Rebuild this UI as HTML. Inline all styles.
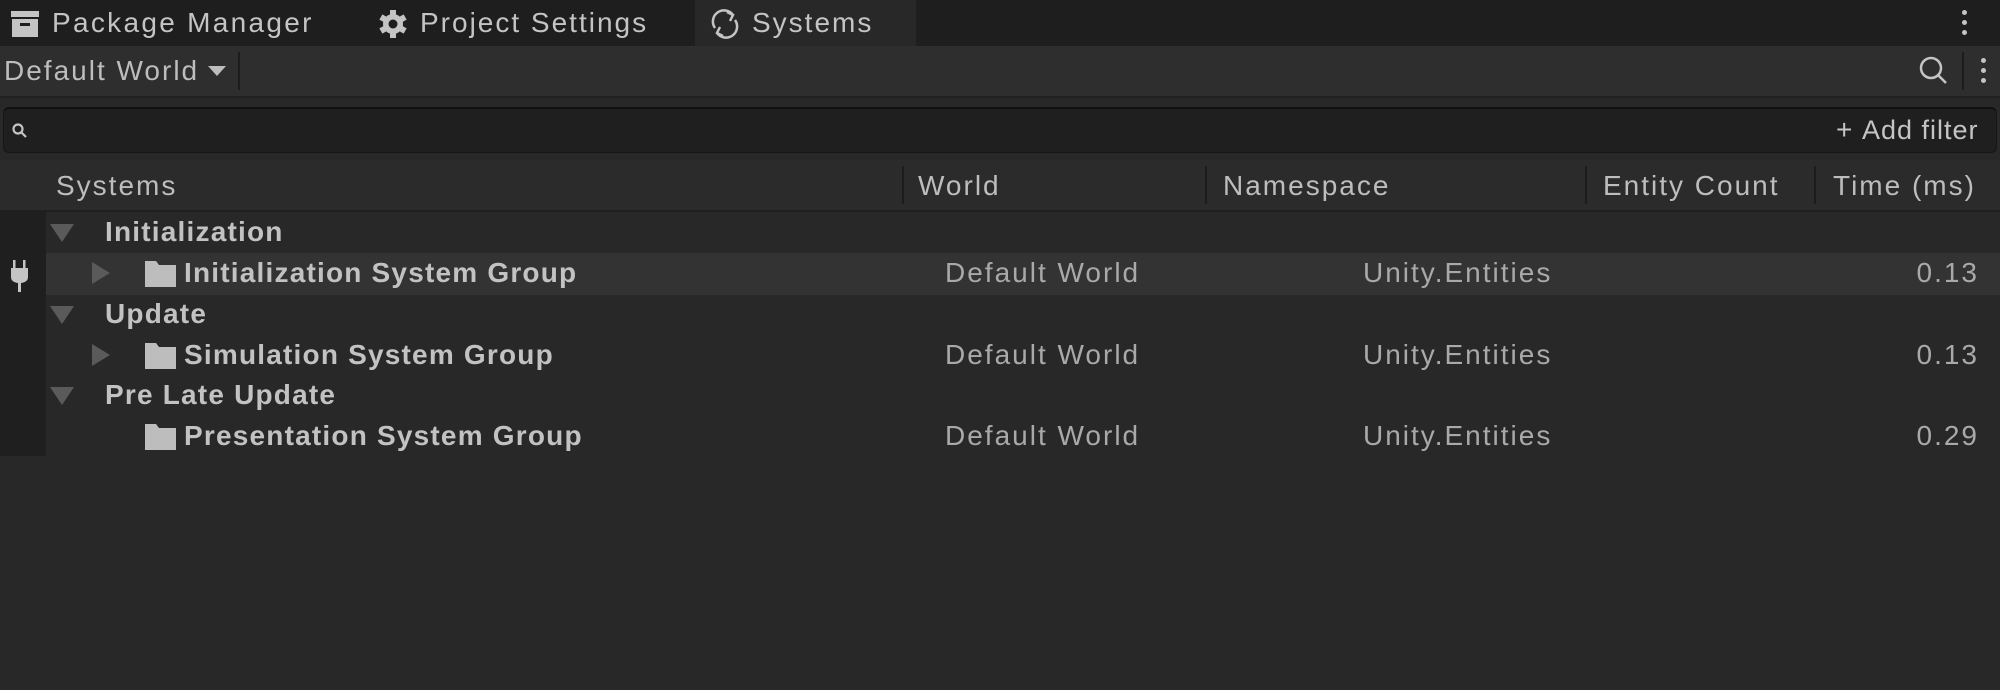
<!DOCTYPE html>
<html><head><style>
*{margin:0;padding:0;box-sizing:border-box}
body{width:2000px;height:690px;background:#282828;font-family:"Liberation Sans",sans-serif;color:#c4c4c4;position:relative;overflow:hidden;font-size:28px}
.a{position:absolute;white-space:nowrap}
.t{letter-spacing:2px}
.b{font-weight:bold;letter-spacing:1.2px;color:#c2c2c2}
.d{color:#a9a9a9;letter-spacing:2px}
</style></head><body>
<div class="a" style="left:0;top:0;width:2000px;height:46px;background:#1e1e1e"></div>
<div class="a" style="left:695px;top:0;width:221px;height:46px;background:#282828"></div>
<svg class="a" style="left:10px;top:10px" width="30" height="28" viewBox="0 0 30 28"><rect x="1" y="1" width="28" height="6" fill="#c4c4c4"/><rect x="2" y="9" width="26" height="18" fill="#c4c4c4"/><rect x="10" y="13" width="10" height="3" fill="#1e1e1e"/></svg>
<div class="a t" style="left:52px;top:7px;letter-spacing:2.3px">Package Manager</div>
<svg class="a" style="left:378px;top:9px" width="30" height="30" viewBox="0 0 30 30"><g fill="#c4c4c4"><circle cx="15" cy="15" r="10"/><rect x="12" y="1" width="6" height="28"/><rect x="12" y="1" width="6" height="28" transform="rotate(60 15 15)"/><rect x="12" y="1" width="6" height="28" transform="rotate(120 15 15)"/></g><circle cx="15" cy="15" r="4.5" fill="#1e1e1e"/></svg>
<div class="a t" style="left:420px;top:7px">Project Settings</div>
<svg class="a" style="left:709px;top:8px" width="32" height="32" viewBox="0 0 32 32" fill="none" stroke="#c4c4c4" stroke-width="2.5"><path d="M6 20 A11 11 0 0 1 24 7"/><path d="M26 12 A11 11 0 0 1 8 25"/><path d="M18 4 L24 7 L21 13"/><path d="M14 28 L8 25 L11 19"/></svg>
<div class="a t" style="left:752px;top:7px">Systems</div>
<div class="a" style="left:1962px;top:10px;width:5px;height:5px;border-radius:3px;background:#c4c4c4;box-shadow:0 10px #c4c4c4,0 20px #c4c4c4"></div>
<div class="a" style="left:0;top:46px;width:2000px;height:52px;background:#2e2e2e;border-bottom:2px solid #202020"></div>
<div class="a t" style="left:4px;top:55px;color:#bdbdbd">Default World</div>
<div class="a" style="left:208px;top:66px;width:0;height:0;border-left:9px solid transparent;border-right:9px solid transparent;border-top:10px solid #bdbdbd"></div>
<div class="a" style="left:238px;top:52px;width:2px;height:38px;background:#1c1c1c"></div>
<svg class="a" style="left:1918px;top:55px" width="32" height="32" viewBox="0 0 32 32" fill="none" stroke="#c4c4c4" stroke-width="2.5"><circle cx="13" cy="13" r="10"/><path d="M20 20 L28 28"/></svg>
<div class="a" style="left:1962px;top:52px;width:2px;height:38px;background:#1c1c1c"></div>
<div class="a" style="left:1981px;top:58px;width:5px;height:5px;border-radius:3px;background:#c4c4c4;box-shadow:0 10px #c4c4c4,0 20px #c4c4c4"></div>
<div class="a" style="left:3px;top:107px;width:1994px;height:46px;background:#1f1f1f;border:1px solid #151515;border-top:2px solid #111;border-radius:6px"></div>
<svg class="a" style="left:11px;top:122px" width="18" height="18" viewBox="0 0 18 18" fill="none" stroke="#c4c4c4" stroke-width="2.2"><circle cx="7" cy="7" r="4.5"/><path d="M10 10 L15 15"/></svg>
<div class="a" style="left:1836px;top:114px;font-size:28px;color:#c4c4c4">+</div>
<div class="a" style="left:1862px;top:115px;font-size:27px;letter-spacing:1px">Add filter</div>
<div class="a" style="left:0;top:160px;width:2000px;height:52px;background:#2b2b2b;border-bottom:2px solid #1f1f1f"></div>
<div class="a t" style="left:56px;top:170px;color:#bdbdbd">Systems</div>
<div class="a t" style="left:918px;top:170px;color:#bdbdbd">World</div>
<div class="a t" style="left:1223px;top:170px;color:#bdbdbd">Namespace</div>
<div class="a t" style="left:1603px;top:170px;color:#bdbdbd">Entity Count</div>
<div class="a t" style="left:1833px;top:170px;color:#bdbdbd">Time (ms)</div>
<div class="a" style="left:902px;top:166px;width:2px;height:38px;background:#1c1c1c"></div>
<div class="a" style="left:1205px;top:166px;width:2px;height:38px;background:#1c1c1c"></div>
<div class="a" style="left:1585px;top:166px;width:2px;height:38px;background:#1c1c1c"></div>
<div class="a" style="left:1814px;top:166px;width:2px;height:38px;background:#1c1c1c"></div>
<div class="a" style="left:0;top:212px;width:46px;height:244px;background:#1f1f1f"></div>
<div class="a" style="left:46px;top:253px;width:1954px;height:42px;background:#333333"></div>
<svg class="a" style="left:9px;top:260px" width="22" height="34" viewBox="0 0 22 34"><g fill="#c4c4c4"><rect x="4" y="0" width="2.5" height="8"/><rect x="14" y="0" width="2.5" height="8"/><path d="M2 8 H19 V17 Q19 22 12 23 H9 Q2 22 2 17Z"/><rect x="9" y="22" width="3" height="10"/></g></svg>
<div class="a" style="left:50px;top:224px;border-left:12px solid transparent;border-right:12px solid transparent;border-top:18px solid #5a5a5a"></div>
<div class="a b" style="left:105px;top:216px">Initialization</div>
<div class="a" style="left:92px;top:262px;border-top:11px solid transparent;border-bottom:11px solid transparent;border-left:18px solid #5a5a5a"></div>
<svg class="a" style="left:145px;top:261px" width="31" height="26" viewBox="0 0 31 26"><path d="M0 0 H11 L14 4 H31 V26 H0Z" fill="#bdbdbd"/></svg>
<div class="a b" style="left:184px;top:257px">Initialization System Group</div>
<div class="a d" style="left:945px;top:257px">Default World</div>
<div class="a d" style="left:1363px;top:257px">Unity.Entities</div>
<div class="a d" style="right:21px;top:257px">0.13</div>
<div class="a" style="left:50px;top:306px;border-left:12px solid transparent;border-right:12px solid transparent;border-top:18px solid #5a5a5a"></div>
<div class="a b" style="left:105px;top:298px">Update</div>
<div class="a" style="left:92px;top:344px;border-top:11px solid transparent;border-bottom:11px solid transparent;border-left:18px solid #5a5a5a"></div>
<svg class="a" style="left:145px;top:343px" width="31" height="26" viewBox="0 0 31 26"><path d="M0 0 H11 L14 4 H31 V26 H0Z" fill="#bdbdbd"/></svg>
<div class="a b" style="left:184px;top:339px">Simulation System Group</div>
<div class="a d" style="left:945px;top:339px">Default World</div>
<div class="a d" style="left:1363px;top:339px">Unity.Entities</div>
<div class="a d" style="right:21px;top:339px">0.13</div>
<div class="a" style="left:50px;top:387px;border-left:12px solid transparent;border-right:12px solid transparent;border-top:18px solid #5a5a5a"></div>
<div class="a b" style="left:105px;top:379px">Pre Late Update</div>
<svg class="a" style="left:145px;top:424px" width="31" height="26" viewBox="0 0 31 26"><path d="M0 0 H11 L14 4 H31 V26 H0Z" fill="#bdbdbd"/></svg>
<div class="a b" style="left:184px;top:420px">Presentation System Group</div>
<div class="a d" style="left:945px;top:420px">Default World</div>
<div class="a d" style="left:1363px;top:420px">Unity.Entities</div>
<div class="a d" style="right:21px;top:420px">0.29</div>
</body></html>
